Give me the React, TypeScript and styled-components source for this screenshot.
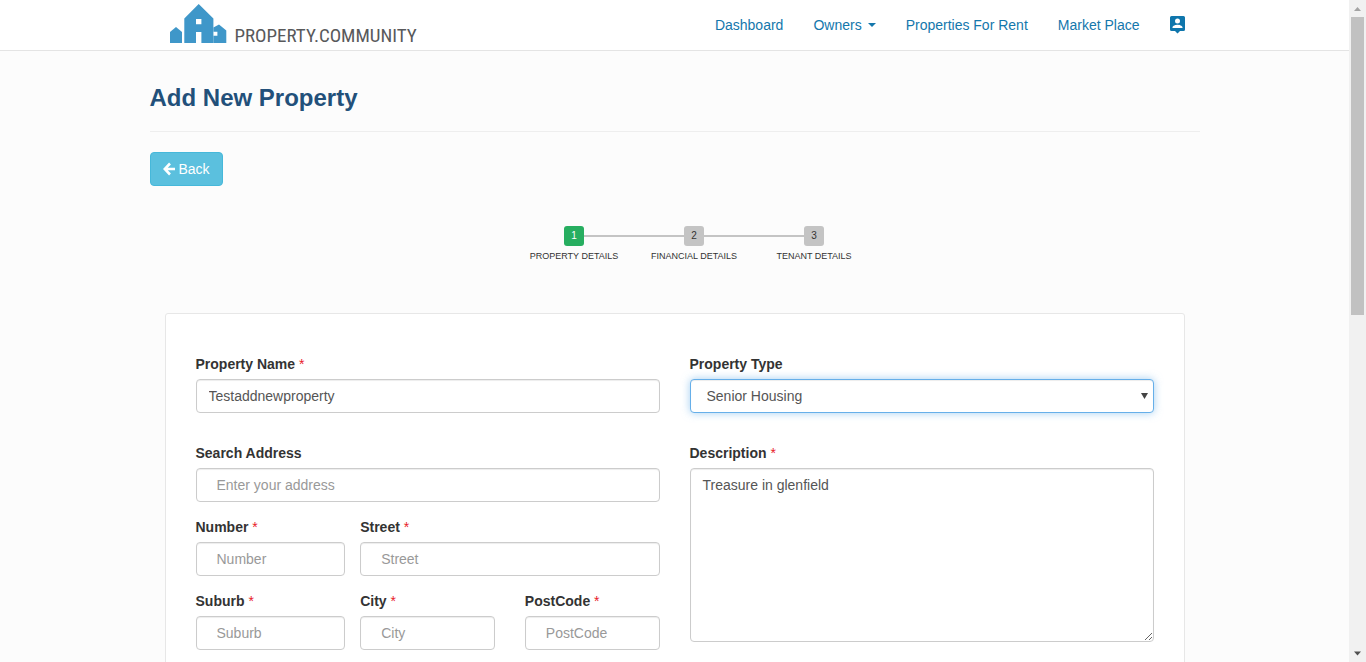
import React from 'react';
import styled, { createGlobalStyle } from 'styled-components';

const GlobalStyle = createGlobalStyle`
  *, *::before, *::after { box-sizing: border-box; }
  body {
    margin: 0;
    background: #fcfcfc;
    color: #333;
    font-family: "Liberation Sans", Arial, sans-serif;
    font-size: 14px;
    line-height: 20px;
  }
  button, input, select, textarea { font: inherit; }
`;

const Shell = styled.div`
  display: grid;
  grid-template-columns: minmax(0, 1fr) 17px;
  height: 100vh;
`;

const Page = styled.div`
  overflow-y: auto;
  scrollbar-width: none;
`;

const ScrollTrack = styled.div`
  display: flex;
  flex-direction: column;
  align-items: center;
  background: #f1f1f1;
`;

const ScrollArrow = styled.svg`
  flex: none;
  width: 17px;
  height: 17px;
`;

const ScrollRail = styled.div`
  flex: 1;
  width: 13px;
`;

const ScrollThumb = styled.div`
  height: 47.4%;
  background: #c1c1c1;
`;

const Container = styled.div`
  width: 100%;
  max-width: 1050px;
  margin: 0 auto;
`;

const Header = styled.header`
  background: #fff;
  border-bottom: 1px solid #e4e4e4;
`;

const HeaderBar = styled(Container)`
  display: flex;
  justify-content: space-between;
  height: 50px;
  padding-left: 20px;
`;

const Brand = styled.a`
  display: flex;
  align-items: flex-start;
  gap: 8px;
  padding-top: 4px;
  color: #58595b;
  text-decoration: none;
`;

const BrandName = styled.span`
  padding-top: 20px;
  font-family: "Roboto Condensed", "Liberation Sans Narrow", "Liberation Sans", sans-serif;
  font-size: 19px;
  line-height: 24px;
  white-space: nowrap;
`;

const Nav = styled.nav`
  display: flex;
  align-items: center;
`;

const NavLink = styled.a`
  display: flex;
  align-items: center;
  gap: 6px;
  padding: 0 15px;
  color: #1477ac;
  text-decoration: none;
  white-space: nowrap;
`;

const Caret = styled.span`
  border-top: 4px solid;
  border-left: 4px solid transparent;
  border-right: 4px solid transparent;
`;

const Title = styled.h1`
  margin: 0;
  padding: 32px 0 18px;
  border-bottom: 1px solid #eee;
  color: #22507a;
  font-size: 24px;
  line-height: 30px;
`;

const BackButton = styled.button`
  display: flex;
  align-items: center;
  gap: 4px;
  height: 34px;
  margin-top: 20px;
  padding: 0 12px;
  border: 1px solid #46b8da;
  border-radius: 4px;
  background: #5bc0de;
  color: #fff;
`;

const Steps = styled.ol`
  display: flex;
  justify-content: center;
  margin: 40px 0 0;
  padding: 0 0 0 39px;
  list-style: none;
`;

const Step = styled.li`
  width: 120px;
  text-align: center;
  text-transform: uppercase;
  font-size: 9px;
`;

const StepTrack = styled.div`
  display: flex;
  align-items: center;
`;

const StepLine = styled.span<{ $hidden?: boolean }>`
  flex: 1;
  height: 2px;
  background: ${(p) => (p.$hidden ? 'transparent' : '#c4c4c4')};
`;

const StepNumber = styled.span<{ $active?: boolean }>`
  width: 20px;
  height: 20px;
  border-radius: 3px;
  background: ${(p) => (p.$active ? '#27ae60' : '#c4c4c4')};
  color: ${(p) => (p.$active ? '#fff' : '#333')};
  font-size: 10px;
`;

const Card = styled.form`
  display: grid;
  grid-template-columns: repeat(2, minmax(0, 1fr));
  gap: 30px;
  margin: 47px 15px 30px;
  padding: 40px 30px;
  border: 1px solid #e7e7e7;
  border-radius: 3px;
  background: #fff;
`;

const FieldStack = styled.div`
  display: flex;
  flex-direction: column;
  gap: 15px;
`;

const FieldRow = styled.div`
  display: grid;
  grid-template-columns: repeat(3, minmax(0, 1fr));
  margin-right: -30px;
`;

const FieldBox = styled.div<{ $gutter: number; $span: number }>`
  grid-column: span ${(p) => p.$span};
  padding-right: ${(p) => p.$gutter}px;
`;

const Label = styled.label`
  display: block;
  margin-bottom: 5px;
  font-weight: bold;
`;

const Required = styled.span`
  color: #e8202a;
  font-weight: normal;
`;

const control = `
  display: block;
  width: 100%;
  border: 1px solid #ccc;
  border-radius: 4px;
  background: #fff;
  color: #555;
  box-shadow: inset 0 1px 1px rgba(0, 0, 0, 0.075);
  outline: none;
`;

const Input = styled.input<{ $indent?: boolean }>`
  ${control}
  height: 34px;
  padding: 6px ${(p) => (p.$indent ? 20 : 12)}px;
  &::placeholder { color: #999; opacity: 1; }
`;

const TextArea = styled.textarea`
  ${control}
  height: 174px;
  padding: 6px 12px;
  resize: vertical;
`;

const SelectWrap = styled.div`
  position: relative;
`;

const Select = styled.select`
  ${control}
  height: 34px;
  padding: 6px 16px;
  appearance: none;
  border-color: #66afe9;
  box-shadow: inset 0 1px 1px rgba(0, 0, 0, 0.075), 0 0 8px rgba(102, 175, 233, 0.6);
`;

const SelectArrow = styled.svg`
  position: absolute;
  top: 14px;
  right: 6px;
  pointer-events: none;
`;

const Logo = () => (
  <svg width="57" height="39" viewBox="0 0 57 39" fill="#3f97c9" fillRule="evenodd" aria-hidden="true">
    <path d="M0 28L6 23L12 28V39H0Z" />
    <path d="M14.300 14.500L28.700 0L43.400 14.500V39H31.400V28H26V39H14.300ZM26 15V20.200H31.400V15Z" />
    <path d="M43.400 23.500L49 20.500L56.300 26.500V39H43.400ZM43.400 27.800V31.800H47.400V27.800Z" />
  </svg>
);

const AccountIcon = () => (
  <svg width="15" height="18" viewBox="0 0 15 18" aria-hidden="true">
    <path
      fill="#0f76ac"
      fillRule="evenodd"
      d="M1.500 0H13.500Q15 0 15 1.500V13.500Q15 15 13.500 15H10L7.500 17.500L5 15H1.500Q0 15 0 13.500V1.500Q0 0 1.500 0ZM7.500 2.500A2.500 2.500 0 1 0 7.500 7.500A2.500 2.500 0 1 0 7.500 2.500ZM2.500 12H12.500V11.200C12.500 9.600 9.200 8.700 7.500 8.700S2.500 9.600 2.500 11.200Z"
    />
  </svg>
);

const ArrowLeft = () => (
  <svg width="12" height="14" viewBox="0 0 12 14" aria-hidden="true">
    <path d="M7 1.500L1.700 7L7 12.500M2 7H12" fill="none" stroke="#fff" strokeWidth="2.600" />
  </svg>
);

type FieldProps = {
  id: string;
  label: string;
  required?: boolean;
  gutter?: number;
  span?: number;
  children: React.ReactNode;
};

const Field = ({ id, label, required, gutter = 0, span = 1, children }: FieldProps) => (
  <FieldBox $gutter={gutter} $span={span}>
    <Label htmlFor={id}>
      {label} {required && <Required>*</Required>}
    </Label>
    {children}
  </FieldBox>
);

const steps = ['Property Details', 'Financial Details', 'Tenant Details'];

export default function App() {
  return (
    <>
      <GlobalStyle />
      <Shell>
        <Page>
          <Header>
            <HeaderBar>
              <Brand href="#">
                <Logo />
                <BrandName>PROPERTY.COMMUNITY</BrandName>
              </Brand>
              <Nav>
                <NavLink href="#">Dashboard</NavLink>
                <NavLink href="#">Owners <Caret /></NavLink>
                <NavLink href="#">Properties For Rent</NavLink>
                <NavLink href="#">Market Place</NavLink>
                <NavLink href="#" aria-label="Account"><AccountIcon /></NavLink>
              </Nav>
            </HeaderBar>
          </Header>
          <Container as="main">
            <Title>Add New Property</Title>
            <BackButton type="button"><ArrowLeft />Back</BackButton>
            <Steps>
              {steps.map((name, i) => (
                <Step key={name}>
                  <StepTrack>
                    <StepLine $hidden={i === 0} />
                    <StepNumber $active={i === 0}>{i + 1}</StepNumber>
                    <StepLine $hidden={i === steps.length - 1} />
                  </StepTrack>
                  {name}
                </Step>
              ))}
            </Steps>
            <Card>
              <Field id="name" label="Property Name" required>
                <Input id="name" defaultValue="Testaddnewproperty" />
              </Field>
              <Field id="type" label="Property Type">
                <SelectWrap>
                  <Select id="type" defaultValue="Senior Housing">
                    <option>Senior Housing</option>
                  </Select>
                  <SelectArrow width="7" height="6" viewBox="0 0 7 6" aria-hidden="true">
                    <path d="M0 0H7L3.500 6Z" fill="#444" />
                  </SelectArrow>
                </SelectWrap>
              </Field>
              <FieldStack>
                <Field id="search" label="Search Address">
                  <Input id="search" $indent placeholder="Enter your address" />
                </Field>
                <FieldRow>
                  <Field id="number" label="Number" required gutter={15}>
                    <Input id="number" $indent placeholder="Number" />
                  </Field>
                  <Field id="street" label="Street" required gutter={30} span={2}>
                    <Input id="street" $indent placeholder="Street" />
                  </Field>
                </FieldRow>
                <FieldRow>
                  <Field id="suburb" label="Suburb" required gutter={15}>
                    <Input id="suburb" $indent placeholder="Suburb" />
                  </Field>
                  <Field id="city" label="City" required gutter={30}>
                    <Input id="city" $indent placeholder="City" />
                  </Field>
                  <Field id="postcode" label="PostCode" required gutter={30}>
                    <Input id="postcode" $indent placeholder="PostCode" />
                  </Field>
                </FieldRow>
              </FieldStack>
              <Field id="description" label="Description" required>
                <TextArea id="description" defaultValue="Treasure in glenfield" />
              </Field>
            </Card>
          </Container>
        </Page>
        <ScrollTrack aria-hidden="true">
          <ScrollArrow viewBox="0 0 17 17"><path d="M5 11L8.500 7L12 11Z" fill="#a3a3a3" /></ScrollArrow>
          <ScrollRail><ScrollThumb /></ScrollRail>
          <ScrollArrow viewBox="0 0 17 17"><path d="M5 6.500H12L8.500 10.500Z" fill="#505050" /></ScrollArrow>
        </ScrollTrack>
      </Shell>
    </>
  );
}
